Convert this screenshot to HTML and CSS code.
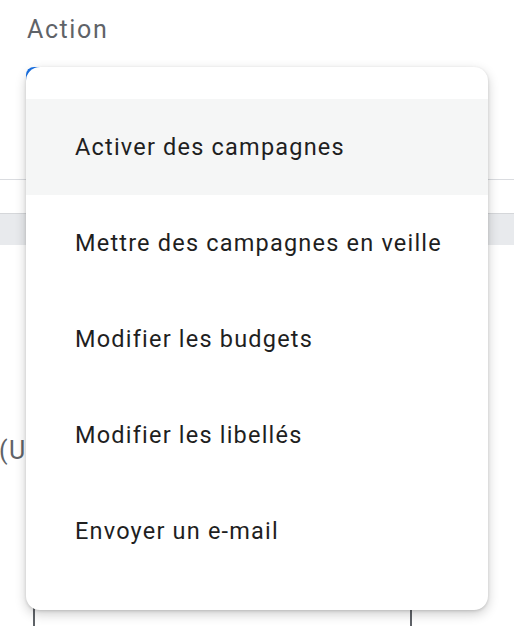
FILE: index.html
```html
<!DOCTYPE html>
<html lang="fr">
<head>
<meta charset="utf-8">
<link rel="stylesheet" href="styles.css">
</head>
<body>
<div class="page">
  <div class="label">Action</div>
  <div class="field"></div>
  <div class="divider"></div>
  <div class="band"></div>
  <div class="stub">(U</div>
  <div class="table-box"></div>

  <ul class="menu">
    <li class="item active">Activer des campagnes</li>
    <li class="item">Mettre des campagnes en veille</li>
    <li class="item">Modifier les budgets</li>
    <li class="item">Modifier les libellés</li>
    <li class="item">Envoyer un e-mail</li>
  </ul>
</div>
</body>
</html>
```
FILE: styles.css
```css
html, body {
  margin: 0;
  padding: 0;
  background: #fff;
  overflow: hidden;
}
.page {
  position: relative;
  width: 514px;
  height: 626px;
  font-family: Roboto, "Liberation Sans", sans-serif;
  display: flex;
  flex-direction: column;
}
.label {
  margin: 14px 0 0 27px;
  font-size: 25px;
  line-height: 32px;
  color: #5f6368;
  letter-spacing: 1.6px;
}
.field {
  margin: 21px 0 0 26px;
  width: 300px;
  height: 56px;
  border: 3px solid #1a73e8;
  border-right: none;
  border-radius: 8px 0 0 8px;
  box-sizing: border-box;
}
.divider {
  margin-top: 56px;
  height: 1px;
  background: #dadce0;
}
.band {
  margin-top: 33px;
  height: 32px;
  background: #e8eaed;
  border-top: 1px solid #d5d7da;
  box-sizing: border-box;
}
.stub {
  margin-top: 190px;
  margin-left: -1px;
  font-size: 25px;
  line-height: 32px;
  letter-spacing: 1.5px;
  color: #5f6368;
}
.table-box {
  margin: 125px 0 0 33px;
  width: 379px;
  flex: 1;
  border-left: 2px solid #5f6368;
  border-right: 2px solid #5f6368;
  box-sizing: border-box;
}
.menu {
  position: absolute;
  left: 26px;
  top: 67px;
  width: 462px;
  margin: 0;
  padding: 32px 0 31px;
  list-style: none;
  background: #fff;
  border-radius: 14px;
  box-shadow: 0 4px 12px rgba(0, 0, 0, 0.2), 0 1px 3px rgba(0, 0, 0, 0.14);
  box-sizing: border-box;
}
.item {
  height: 96px;
  display: flex;
  align-items: center;
  padding-left: 49px;
  font-size: 23.5px;
  letter-spacing: 1.2px;
  color: #1f1f1f;
}
.item.active {
  background: #f5f6f6;
}
```
